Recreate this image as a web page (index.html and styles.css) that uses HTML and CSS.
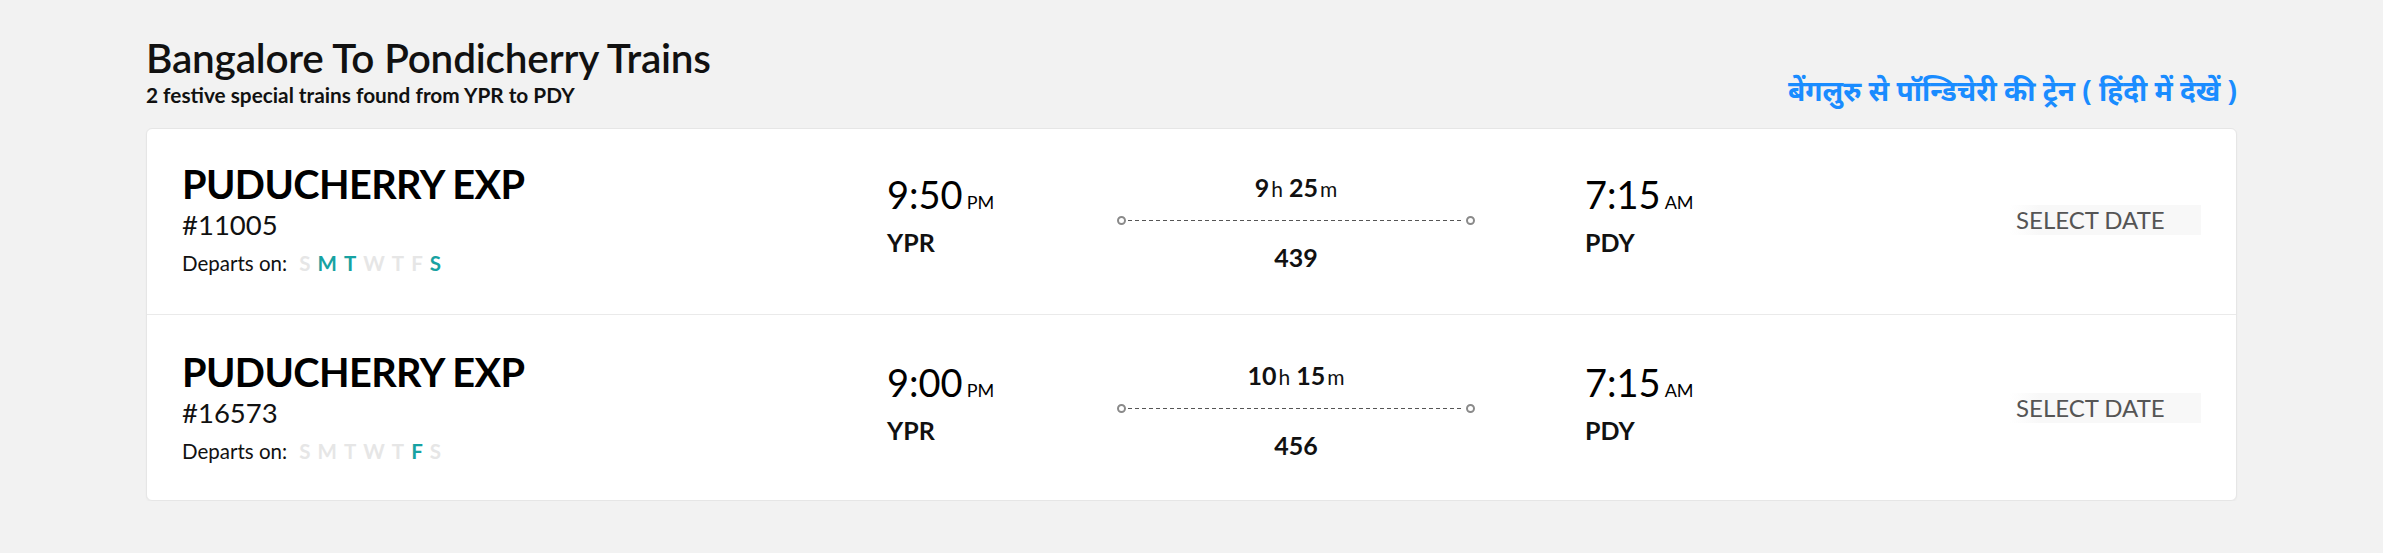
FILE: index.html
```html
<!DOCTYPE html>
<html lang="en">
<head>
<meta charset="utf-8">
<title>Bangalore To Pondicherry Trains</title>
<link rel="stylesheet" href="styles.css">
</head>
<body>
<div class="page">
  <header class="head">
    <div class="head-text">
      <h1 class="title">Bangalore To Pondicherry Trains</h1>
      <p class="subtitle">2 festive special trains found from YPR to PDY</p>
    </div>
    <a class="hindi" href="#">बेंगलुरु से पॉन्डिचेरी की ट्रेन ( हिंदी में देखें )</a>
  </header>

  <section class="card">
    <div class="row">
      <div class="info">
        <div class="name">PUDUCHERRY EXP</div>
        <div class="num">#11005</div>
        <div class="days">Departs on: <span class="d">S</span><span class="d on">M</span><span class="d on">T</span><span class="d">W</span><span class="d">T</span><span class="d">F</span><span class="d on">S</span></div>
      </div>
      <div class="stop">
        <div class="time">9:50<span class="ampm">PM</span></div>
        <div class="code">YPR</div>
      </div>
      <div class="mid">
        <div class="dur">9<span class="u">h</span> 25<span class="u">m</span></div>
        <div class="track"><span class="dot"></span><span class="dash"></span><span class="dot"></span></div>
        <div class="dist">439</div>
      </div>
      <div class="stop arr">
        <div class="time">7:15<span class="ampm">AM</span></div>
        <div class="code">PDY</div>
      </div>
      <div class="sel"><button class="btn">SELECT DATE</button></div>
    </div>
    <div class="row">
      <div class="info">
        <div class="name">PUDUCHERRY EXP</div>
        <div class="num">#16573</div>
        <div class="days">Departs on: <span class="d">S</span><span class="d">M</span><span class="d">T</span><span class="d">W</span><span class="d">T</span><span class="d on">F</span><span class="d">S</span></div>
      </div>
      <div class="stop">
        <div class="time">9:00<span class="ampm">PM</span></div>
        <div class="code">YPR</div>
      </div>
      <div class="mid">
        <div class="dur">10<span class="u">h</span> 15<span class="u">m</span></div>
        <div class="track"><span class="dot"></span><span class="dash"></span><span class="dot"></span></div>
        <div class="dist">456</div>
      </div>
      <div class="stop arr">
        <div class="time">7:15<span class="ampm">AM</span></div>
        <div class="code">PDY</div>
      </div>
      <div class="sel"><button class="btn">SELECT DATE</button></div>
    </div>
  </section>
</div>
</body>
</html>
```

FILE: styles.css
```css
* { box-sizing: border-box; }
html, body { margin: 0; padding: 0; }
body {
  background: #f2f2f2;
  font-family: Lato, "Noto Sans", sans-serif;
  color: #111;
}
.page {
  padding: 0 146px;
}
.head {
  display: flex;
  justify-content: space-between;
  align-items: flex-end;
  padding-top: 34px;
}
.title {
  margin: 0;
  font-size: 40.5px;
  line-height: 47px;
  font-weight: 600;
  color: #111;
  letter-spacing: -0.2px;
}
.subtitle {
  margin: 1px 0 0;
  font-size: 20.8px;
  line-height: 25px;
  font-weight: 700;
  color: #111;
}
.hindi {
  font-family: "Noto Sans", "Noto Sans Devanagari", "Lohit Devanagari", sans-serif;
  font-size: 28px;
  line-height: 36px;
  font-weight: 700;
  color: #1a8cff;
  text-decoration: none;
  margin-bottom: -1px;
}
.card {
  margin-top: 21px;
  background: #fff;
  border: 1px solid #e6e6e6;
  border-radius: 6px;
  box-shadow: 0 1px 2px rgba(0,0,0,0.04);
}
.row {
  display: grid;
  grid-template-columns: 705px 230px 358px 1fr auto;
  align-items: start;
  padding: 0 35px;
  height: 186px;
  border-bottom: 1px solid #eaeaea;
}
.row:last-child {
  border-bottom: 0;
  height: 185px;
  padding-top: 2px;
}
.info { padding-top: 30px; }
.name {
  font-size: 39.7px;
  line-height: 50px;
  font-weight: 700;
  color: #000;
  letter-spacing: -0.6px;
}
.num {
  font-size: 27.5px;
  line-height: 32px;
  font-weight: 400;
  color: #111;
}
.days {
  margin-top: 8px;
  font-size: 20.5px;
  line-height: 28px;
  color: #111;
}
.d {
  font-weight: 700;
  color: #e6e6e6;
  margin-left: 7px;
}
.d.on { color: #17a2a2; }
.stop { padding-top: 42px; }
.arr { padding-left: 110px; }
.time {
  font-size: 38px;
  line-height: 46px;
  color: #000;
}
.ampm {
  font-size: 18px;
  margin-left: 4px;
}
.code {
  margin-top: 1px;
  font-size: 25px;
  line-height: 32px;
  font-weight: 700;
  color: #111;
}
.mid {
  padding-top: 43px;
  display: flex;
  flex-direction: column;
  align-items: center;
}
.dur {
  font-size: 25px;
  line-height: 30px;
  font-weight: 700;
  color: #111;
}
.u {
  font-size: 21px;
  font-weight: 400;
  margin-left: 2px;
}
.track {
  margin-top: 11px;
  width: 100%;
  height: 10px;
  display: flex;
  align-items: center;
}
.dot {
  width: 9px;
  height: 9px;
  border: 2px solid #8a8a8a;
  border-radius: 50%;
  flex: none;
}
.dash {
  flex: 1;
  height: 1px;
  margin: 0 2px;
  background: repeating-linear-gradient(to right, #555 0 4px, transparent 4px 7px);
}
.dist {
  margin-top: 16px;
  font-size: 25px;
  line-height: 32px;
  font-weight: 700;
  color: #111;
}
.sel { padding-top: 76px; }
.btn {
  display: block;
  width: 191px;
  height: 30px;
  padding: 0 0 0 6px;
  text-align: left;
  border: 0;
  background: linear-gradient(to right, #fff, #f8f8f8 15%);
  font-family: Lato, sans-serif;
  font-size: 24px;
  line-height: 30px;
  color: #555;
  cursor: pointer;
}
```
